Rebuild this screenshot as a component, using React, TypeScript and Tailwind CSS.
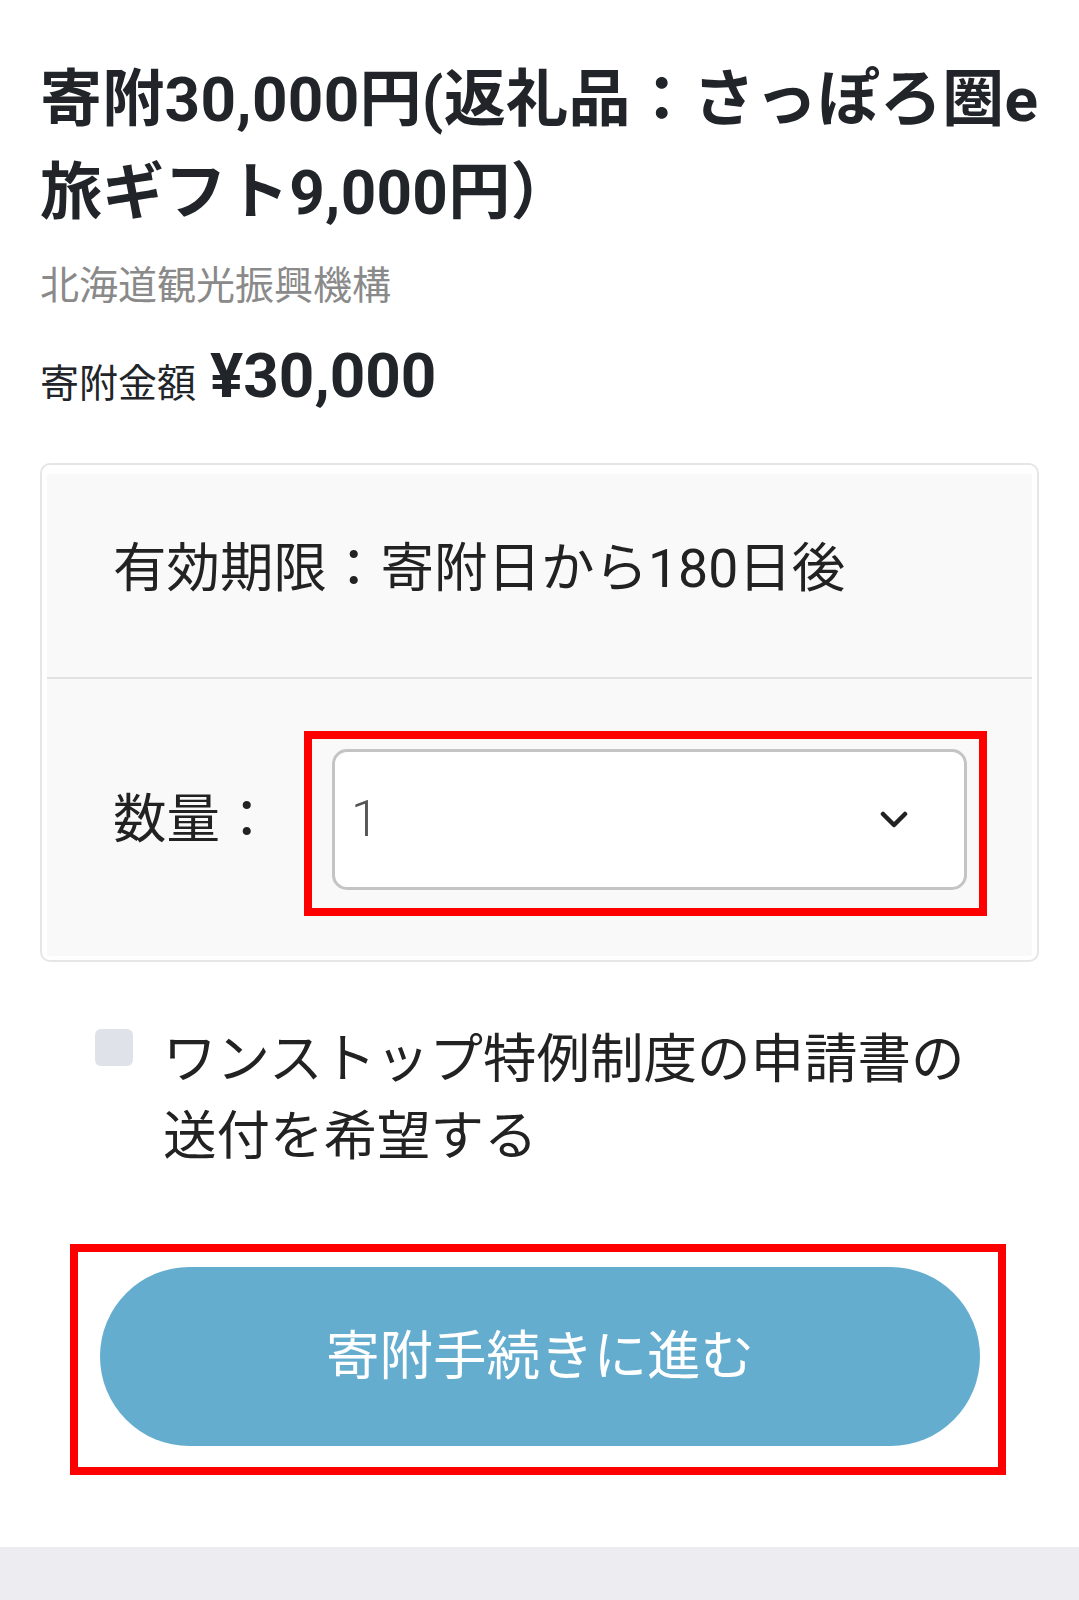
import React from "react";

export default function App() {
  const font = { fontFamily: 'Roboto, "Noto Sans CJK JP", sans-serif' };
  return (
    <div className="w-[1079px] min-h-[1600px] bg-white flex flex-col" style={font}>
      <div className="px-[40px] pt-[53px]">
        <h1 className="text-[62px] leading-[93px] font-bold text-[#212529] tracking-[0.3px]">
          寄附30,000円(返礼品：さっぽろ圏e旅ギフト9,000円）
        </h1>
        <p className="mt-[17px] text-[39px] leading-[60px] text-[#8a8a8a]">北海道観光振興機構</p>
        <div className="mt-[25px] flex items-baseline gap-[14px]">
          <span className="text-[39px] leading-[60px] text-[#212529]">寄附金額</span>
          <span className="text-[62px] leading-[70px] font-bold text-[#212529]">¥30,000</span>
        </div>

        <div className="mt-[49px] rounded-[10px] border-2 border-[#e6e6e6] bg-white pt-[9px] px-[5px] pb-[4px]">
          <div className="bg-[#f9f9f9]">
            <div className="pl-[66px] pt-[56px] pb-[69px] text-[53.5px] leading-[78px] text-[#222]">
              有効期限：寄附日から180日後
            </div>
            <div className="h-[2px] bg-[#e2e2e2]" />
            <div className="flex items-center pl-[66px] pr-[65px] pt-[70px] pb-[66px]">
              <span className="text-[53.5px] leading-[78px] text-[#222] w-[219px] shrink-0">数量：</span>
              <div className="relative flex-1">
                <div className="h-[141px] rounded-[15px] border-[3px] border-[#c4c4c4] bg-white flex items-center justify-between pl-[16px] pr-[56px]">
                  <span className="text-[50px] font-light text-[#555]">1</span>
                  <svg width="28" height="18" viewBox="0 0 28 18" fill="none">
                    <path d="M3 3 L14 14 L25 3" stroke="#222" strokeWidth="4.5" strokeLinecap="round" strokeLinejoin="round" />
                  </svg>
                </div>
                <div className="absolute -left-[28px] -right-[20px] -top-[18px] -bottom-[26px] border-[8px] border-[#ff0000] pointer-events-none" />
              </div>
            </div>
          </div>
        </div>

        <div className="mt-[59px] flex items-start pl-[55px] pr-[50px]">
          <div className="mt-[8px] w-[38px] h-[37px] rounded-[6px] bg-[#dfe2e8] shrink-0" />
          <p className="ml-[30px] text-[53.5px] leading-[77px] text-[#222]">
            ワンストップ特例制度の申請書の送付を希望する
          </p>
        </div>

        <div className="mt-[92px] px-[60px] pb-[101px]">
          <div className="relative">
            <button className="w-[880px] h-[179px] rounded-full bg-[#64adcf] text-white text-[53.5px] leading-[78px]">
              寄附手続きに進む
            </button>
            <div className="absolute -left-[30px] -right-[27px] -top-[23px] -bottom-[29px] border-[8px] border-[#ff0000] pointer-events-none" />
          </div>
        </div>
      </div>
      <div className="flex-1 bg-[#ececf1] min-h-[53px]" />
    </div>
  );
}
